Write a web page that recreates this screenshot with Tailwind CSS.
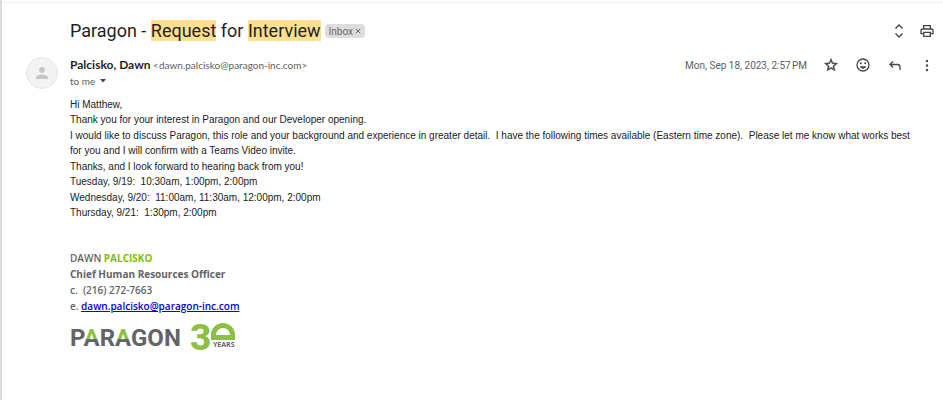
<!DOCTYPE html>
<html lang="en">
<head>
    <meta charset="UTF-8">
    <meta name="viewport" content="width=device-width, initial-scale=1.0">
    <title>Paragon - Request for Interview</title>
    <script src="https://cdn.jsdelivr.net/npm/@tailwindcss/browser@4"></script>
</head>
<body class="bg-white">
    <main class="min-h-screen border-l-2 border-[#dcdcdc] font-['Roboto',sans-serif] text-[#1f1f1f]">
        <div class="h-[3px] border-b border-[#eeeeee]"></div>

        <!-- Subject -->
        <header class="flex items-center pt-4 pl-[68px] pr-2">
            <h1 class="text-lg leading-6 whitespace-nowrap">Paragon - <mark class="bg-[#fee08f] text-inherit">Request</mark> for <mark class="bg-[#fee08f] text-inherit">Interview</mark></h1>
            <div class="ml-1 flex h-3.5 items-center gap-0.5 rounded-sm bg-[#dddddd] px-1 text-[10px] text-[#666666]">
                <span>Inbox</span>
                <button type="button" aria-label="Remove label Inbox">
                    <svg class="size-1.5" viewBox="0 0 6 6" fill="none" stroke="currentColor"><path d="M.8.8l4.4 4.4M5.2.8L.8 5.2"/></svg>
                </button>
            </div>
            <div class="ml-auto flex items-center gap-3 text-[#444746]">
                <button type="button" aria-label="Expand all">
                    <svg class="size-4" viewBox="0 0 16 16" fill="none" stroke="currentColor" stroke-width="1.4"><path d="M4.500 5.500L8 2l3.500 3.500M4.500 10.500L8 14l3.500-3.500"/></svg>
                </button>
                <button type="button" aria-label="Print">
                    <svg class="size-4" viewBox="0 0 24 24" fill="currentColor"><path d="M19 8h-1V3H6v5H5c-1.660 0-3 1.340-3 3v6h4v4h12v-4h4v-6c0-1.660-1.340-3-3-3zM8 5h8v3H8V5zm8 12v2H8v-4h8v2zm2-2v-2H6v2H4v-4c0-.55.45-1 1-1h14c.55 0 1 .45 1 1v4h-2z"/></svg>
                </button>
            </div>
        </header>

        <!-- Sender -->
        <section class="flex items-start pt-3.5 pl-6 pr-2">
            <div class="mr-3 flex size-8 shrink-0 items-center justify-center rounded-full border border-[#e6e6e6] bg-[#f3f3f3]">
                <svg class="size-[18px]" viewBox="0 0 24 24" fill="#c6c6c6"><path d="M12 12c2.200 0 4-1.800 4-4s-1.800-4-4-4-4 1.800-4 4 1.800 4 4 4zm0 2c-2.700 0-8 1.300-8 4v2h16v-2c0-2.700-5.300-4-8-4z"/></svg>
            </div>
            <div class="font-['Lato',sans-serif] text-[10px] leading-4 text-[#5e5e5e]">
                <p><span class="text-xs leading-4 font-bold text-[#1f1f1f]">Palcisko, Dawn</span> &lt;dawn.palcisko@paragon-inc.com&gt;</p>
                <button type="button" class="flex items-center gap-1">to me
                    <svg class="h-1 w-2" viewBox="0 0 8 4" fill="#444746"><path d="M1 0h6L4 3.500z"/></svg>
                </button>
            </div>
            <div class="ml-auto flex h-4 items-center gap-4 text-[#444746]">
                <time class="text-[10px] text-[#5e5e5e]" datetime="2023-09-18T14:57">Mon, Sep 18, 2023, 2:57&#8239;PM</time>
                <button type="button" aria-label="Star">
                    <svg class="size-4" viewBox="0 0 24 24" fill="currentColor" stroke="currentColor" stroke-width=".6"><path d="M22 9.240l-7.190-.62L12 2 9.190 8.630 2 9.240l5.460 4.730L5.820 21 12 17.270 18.180 21l-1.630-7.030L22 9.240zM12 15.400l-3.760 2.270 1-4.280-3.320-2.880 4.380-.38L12 6.100l1.710 4.040 4.380.38-3.320 2.880 1 4.280L12 15.400z"/></svg>
                </button>
                <button type="button" aria-label="Add reaction">
                    <svg class="size-4" viewBox="0 0 16 16" fill="none" stroke="currentColor" stroke-width="1.300"><circle cx="8" cy="8" r="6"/><path d="M4.700 9.300h6.600c-.6 1.600-1.800 2.500-3.300 2.500s-2.700-.9-3.300-2.500z" fill="currentColor" stroke="none"/><circle cx="5.800" cy="6.300" r="1" fill="currentColor" stroke="none"/><circle cx="10.200" cy="6.300" r="1" fill="currentColor" stroke="none"/></svg>
                </button>
                <button type="button" aria-label="Reply">
                    <svg class="size-4" viewBox="0 0 16 16" fill="none" stroke="currentColor" stroke-width="1.300"><path d="M6 4.500L3 7.500l3 3M3.300 7.500h7.200c1.700 0 2.500.8 2.500 2.500v3"/></svg>
                </button>
                <button type="button" aria-label="More">
                    <svg class="size-4" viewBox="0 0 16 16" fill="currentColor"><circle cx="8" cy="4" r="1.200"/><circle cx="8" cy="8.500" r="1.200"/><circle cx="8" cy="13" r="1.200"/></svg>
                </button>
            </div>
        </section>

        <!-- Message -->
        <article class="pt-2 pl-[68px] pr-5">
            <div class="space-y-px font-['Liberation_Sans',Arial,sans-serif] text-[10px] leading-[15px] text-[#222222]">
                <p>Hi Matthew,<br>Thank you for your interest in Paragon and our Developer opening.</p>
                <p>I would like to discuss Paragon, this role and your background and experience in greater detail.&nbsp; I have the following times available (Eastern time zone).&nbsp; Please let me know what works best for you and I will confirm with a Teams Video invite.</p>
                <p>Thanks, and I look forward to hearing back from you!<br>Tuesday, 9/19:&nbsp; 10:30am, 1:00pm, 2:00pm</p>
                <p>Wednesday, 9/20:&nbsp; 11:00am, 11:30am, 12:00pm, 2:00pm<br>Thursday, 9/21:&nbsp; 1:30pm, 2:00pm</p>
            </div>

            <!-- Signature -->
            <address class="mt-[30px] font-['Open_Sans',sans-serif] text-[10px] leading-4 font-semibold text-[#636466] not-italic">
                <p>DAWN <span class="font-bold text-[#84bd00]">PALCISKO</span></p>
                <p class="font-bold">Chief Human Resources Officer</p>
                <p>c.&nbsp; (216) 272-7663</p>
                <p>e. <a class="text-[#0000ee] underline" href="mailto:dawn.palcisko@paragon-inc.com">dawn.palcisko@paragon-inc.com</a></p>
            </address>
            <svg class="mt-1.5 h-9 w-[168px] overflow-visible" viewBox="0 0 168 36" role="img" aria-label="Paragon 30 years">
                <defs>
                    <linearGradient id="apex" gradientUnits="userSpaceOnUse" x1="0" y1="6" x2="0" y2="26">
                        <stop offset="0.65" stop-color="#8cc044"/>
                        <stop offset="0.65" stop-color="#636466"/>
                    </linearGradient>
                </defs>
                <text x="0" y="26" font-family="Roboto, sans-serif" font-weight="700" font-size="24" fill="#636466">P<tspan fill="url(#apex)">A</tspan>R<tspan fill="url(#apex)">A</tspan>GON</text>
                <text x="120" y="30" font-family="Roboto, sans-serif" font-weight="800" font-size="37" fill="#8cc044">3</text>
                <path fill="#8cc044" fill-rule="evenodd" d="M141 20v-5a12 12 0 0 1 24 0v5zM146 15h14a7 7 0 0 0-14 0z"/>
                <text x="143" y="27" font-family="Open Sans, sans-serif" font-weight="700" font-size="7" fill="#636466">YEARS</text>
            </svg>
        </article>
    </main>
</body>
</html>
